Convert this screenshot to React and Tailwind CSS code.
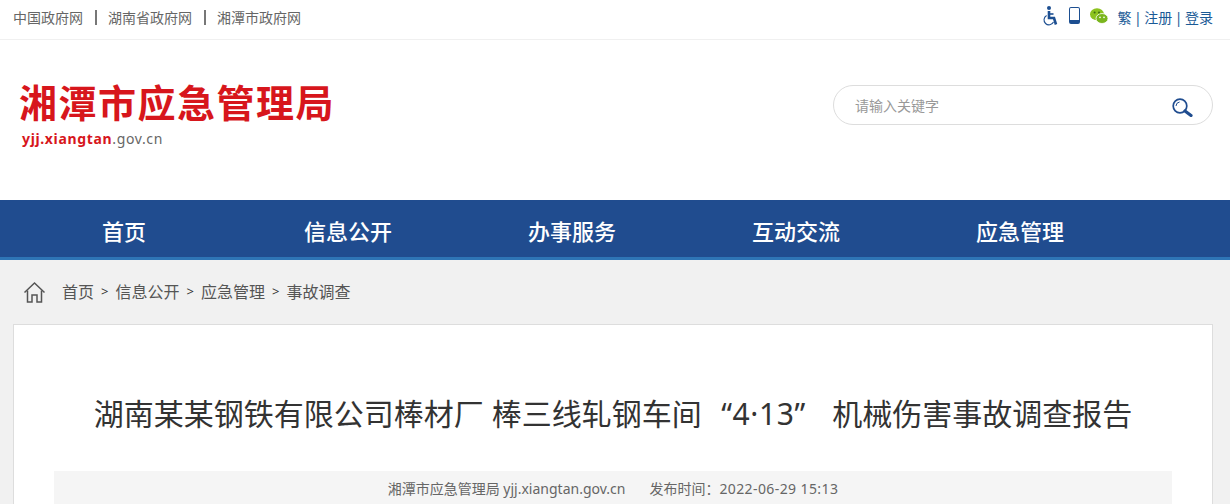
const NAV = ['首页', '信息公开', '办事服务', '互动交流', '应急管理'];
const CRUMBS = ['信息公开', '应急管理', '事故调查'];

const TopBar = () => (
    <div className="h-10 border-b border-[#f0f0f0] flex justify-between pl-[13px] pr-[17px]">
        <div className="flex items-center h-[34px] text-[14px] text-[#666]">
            <span>中国政府网</span>
            <span className="w-[2px] h-[15px] bg-[#777] ml-[12px] mr-[11px]"></span>
            <span>湖南省政府网</span>
            <span className="w-[2px] h-[15px] bg-[#777] ml-[12px] mr-[11px]"></span>
            <span>湘潭市政府网</span>
        </div>
        <div className="flex items-start pt-[6px]">
            <svg width="15" height="20" viewBox="0 0 15 20" fill="none">
                <circle cx="6" cy="2" r="2" fill="#1d4f91" />
                <path d="M6 5v7h5l2 6.5" stroke="#1d4f91" strokeWidth="2.6" />
                <path d="M6 8h4.5" stroke="#1d4f91" strokeWidth="1.6" />
                <path d="M3.6 9.5a5 5 0 1 0 6.9 6.6" stroke="#1d4f91" strokeWidth="1.1" />
            </svg>
            <div className="ml-[11px] mt-[1px] w-[11px] h-[17px] border-[1.5px] border-b-[4px] border-[#1d4f91] rounded-[2px]"></div>
            <svg className="ml-[10px] mt-[2px]" width="18" height="16" viewBox="0 0 18 16">
                <ellipse cx="7" cy="6.2" rx="7" ry="6" fill="#8cc21e" />
                <ellipse cx="12" cy="10.5" rx="6" ry="5" fill="#7ab51d" stroke="#fff" strokeWidth="0.8" />
                <circle cx="4.6" cy="4.4" r="1" fill="#3f6a10" />
                <circle cx="9" cy="4.4" r="1" fill="#3f6a10" />
                <circle cx="10" cy="9.4" r="0.8" fill="#fff" />
                <circle cx="14" cy="9.4" r="0.8" fill="#fff" />
            </svg>
            <div className="ml-[10px] mt-[3px] text-[14px] leading-[18px] text-[#1a5a96] flex items-center gap-[2.5px]">
                <span>繁</span>
                <span>|</span>
                <span>注册</span>
                <span>|</span>
                <span>登录</span>
            </div>
        </div>
    </div>
);

const Header = () => (
    <div className="h-[160px] flex justify-between pl-[19px] pr-[17px]">
        <div className="pt-[40px]">
            <div className="text-[38px] leading-[44px] font-bold tracking-[1.5px] text-[#d7161c]">湘潭市应急管理局</div>
            <div className="pl-[3px] mt-[5px] text-[14px] leading-[20px] tracking-[0.65px] text-[#666]">
                <span className="font-bold text-[#d7161c]">yjj.xiangtan</span>.gov.cn
            </div>
        </div>
        <div className="mt-[45px] w-[380px] h-10 rounded-[20px] border border-[#ddd] flex items-center justify-between pl-[21px] pr-[19px]">
            <span className="text-[14px] text-[#999] mt-[1px]">请输入关键字</span>
            <svg className="mt-[5px]" width="21" height="19" viewBox="0 0 21 19" fill="none">
                <circle cx="8" cy="8" r="6.8" stroke="#1f4c8f" strokeWidth="1.7" />
                <path d="M4 8a4.2 4.2 0 0 1 3.6-4" stroke="#1f4c8f" strokeWidth="1" />
                <path d="M13 13l6 4.5" stroke="#1f4c8f" strokeWidth="3.2" strokeLinecap="round" />
            </svg>
        </div>
    </div>
);

const Nav = () => (
    <div className="h-[60px] bg-[#204c8f] border-b-[3px] border-[#2e75b6] flex pl-[12px] pt-[1px]">
        {NAV.map(item => (
            <div key={item} className="w-[224px] text-center text-[22px] leading-[60px] font-medium text-white">{item}</div>
        ))}
    </div>
);

const Breadcrumb = () => (
    <div className="h-[64px] flex items-center pl-[23px] text-[16px] text-[#555]">
        <svg width="23" height="23" viewBox="0 0 23 23" fill="none" stroke="#555" strokeWidth="1.5">
            <path d="M1.5 11.5 11.5 2l10 9.5" />
            <path d="M4.5 9.5V21h4.5v-7h5v7h4.5V9.5" />
        </svg>
        <span className="ml-[16px]">首页</span>
        {CRUMBS.map(item => (
            <span key={item} className="flex items-center">
                <span className="w-[21.5px] text-center text-[13px] text-[#333]">&gt;</span>
                <span>{item}</span>
            </span>
        ))}
    </div>
);

const Article = () => (
    <div className="ml-[13px] mr-[17px] bg-white border border-[#ddd] px-10 h-[300px]">
        <h1 className="pt-[65px] text-center text-[30px] leading-[48px] text-[#333] whitespace-nowrap">
            湖南某某钢铁有限公司棒材厂 棒三线轧钢车间
            <span className="ml-[19.5px] tracking-[0.6px]">“4·13”</span>
            <span className="ml-[18.5px]"> 机械伤害事故调查报告</span>
        </h1>
        <div className="mt-[33px] h-[40px] pb-[6px] bg-[#f5f5f5] flex justify-center items-center text-[14px] text-[#666] gap-[24px]">
            <span>湘潭市应急管理局 yjj.xiangtan.gov.cn</span>
            <span>发布时间：<span className="tracking-[0.4px]">2022-06-29 15:13</span></span>
        </div>
    </div>
);

export default function App() {
    return (
        <div className="h-[504px] overflow-hidden bg-white font-['Noto_Sans','Noto_Sans_CJK_SC',sans-serif]">
            <TopBar />
            <Header />
            <Nav />
            <div className="bg-[#f1f1f1] h-[244px]">
                <Breadcrumb />
                <Article />
            </div>
        </div>
    );
}
